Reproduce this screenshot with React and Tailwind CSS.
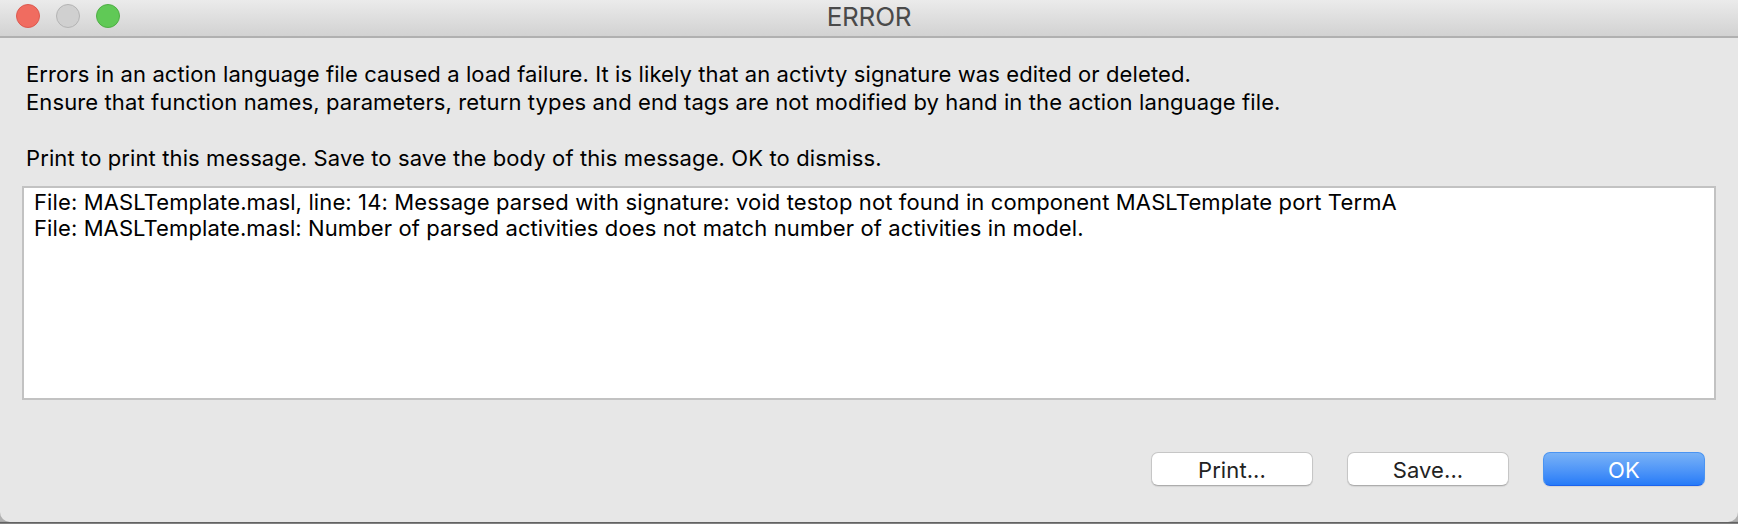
const message = [
  { text: "Errors in an action language file caused a load failure. It is likely that an activty signature was edited or deleted.", spacing: "tracking-[0.102px]" },
  { text: "Ensure that function names, parameters, return types and end tags are not modified by hand in the action language file.", spacing: "tracking-[0.11px]" },
  { text: "\u00a0", spacing: "" },
  { text: "Print to print this message. Save to save the body of this message. OK to dismiss.", spacing: "tracking-[0.11px]" },
];

const details = [
  { text: "File: MASLTemplate.masl, line: 14: Message parsed with signature: void testop not found in component MASLTemplate port TermA", spacing: "tracking-[0.117px]" },
  { text: "File: MASLTemplate.masl: Number of parsed activities does not match number of activities in model.", spacing: "tracking-[0.105px]" },
];

function TitleBar() {
  return (
    <header className="grid h-[38px] grid-cols-[1fr_auto_1fr] border-b-2 border-[#b0b0b0] bg-linear-to-b from-[#ebebeb] to-[#d2d2d2]">
      <div className="flex gap-4 pt-1 pl-4">
        <span className="size-6 rounded-full border border-[#dc5a50] bg-[#f06c60]" />
        <span className="size-6 rounded-full border border-[#b4b4b4] bg-[#d0d0d0]" />
        <span className="size-6 rounded-full border border-[#4fae45] bg-[#60c956]" />
      </div>
      <h1 className="text-[26px] leading-[33px] tracking-[-0.2px] text-[#4a4a4a]">ERROR</h1>
    </header>
  );
}

function Button({ children, primary }) {
  const look = primary
    ? "border-[#4a94f2] border-b-[#1c63ee] bg-linear-to-b from-[#79b2f6] to-[#267bf8] text-white"
    : "border-[#c6c6c6] border-b-[#adadad] bg-white text-[#222]";
  return (
    <button className={`h-[34px] w-[162px] rounded-[7px] border pt-0.5 leading-[30px] tracking-[0.1px] shadow-[0_1px_1px_rgba(0,0,0,0.08)] ${look}`}>
      {children}
    </button>
  );
}

export default function App() {
  return (
    <div className="h-[524px] w-[1738px] overflow-hidden bg-linear-to-b from-[#b0b0b0] from-[99.5%] via-[#606060] via-[99.7%] to-[#929292] font-['Inter',sans-serif] text-[22px] text-black">
      <div className="flex h-[522px] flex-col overflow-hidden rounded-b-[10px] bg-[#e7e7e7]">
        <TitleBar />
        <div className="flex h-[148px] flex-col pt-[22px] pl-[26px]">
          {message.map((line, i) => (
            <p key={i} className={`h-7 leading-7 whitespace-pre ${line.spacing}`}>{line.text}</p>
          ))}
        </div>
        <div className="mx-[22px] h-[214px] border-2 border-[#c2c2c2] bg-white pt-px pl-[10px]">
          {details.map((line, i) => (
            <p key={i} className={`h-[26px] leading-[26px] whitespace-pre ${line.spacing}`}>{line.text}</p>
          ))}
        </div>
        <div className="mt-[52px] flex justify-end gap-[34px] pr-[33px]">
          <Button>Print...</Button>
          <Button>Save...</Button>
          <Button primary>OK</Button>
        </div>
      </div>
    </div>
  );
}
